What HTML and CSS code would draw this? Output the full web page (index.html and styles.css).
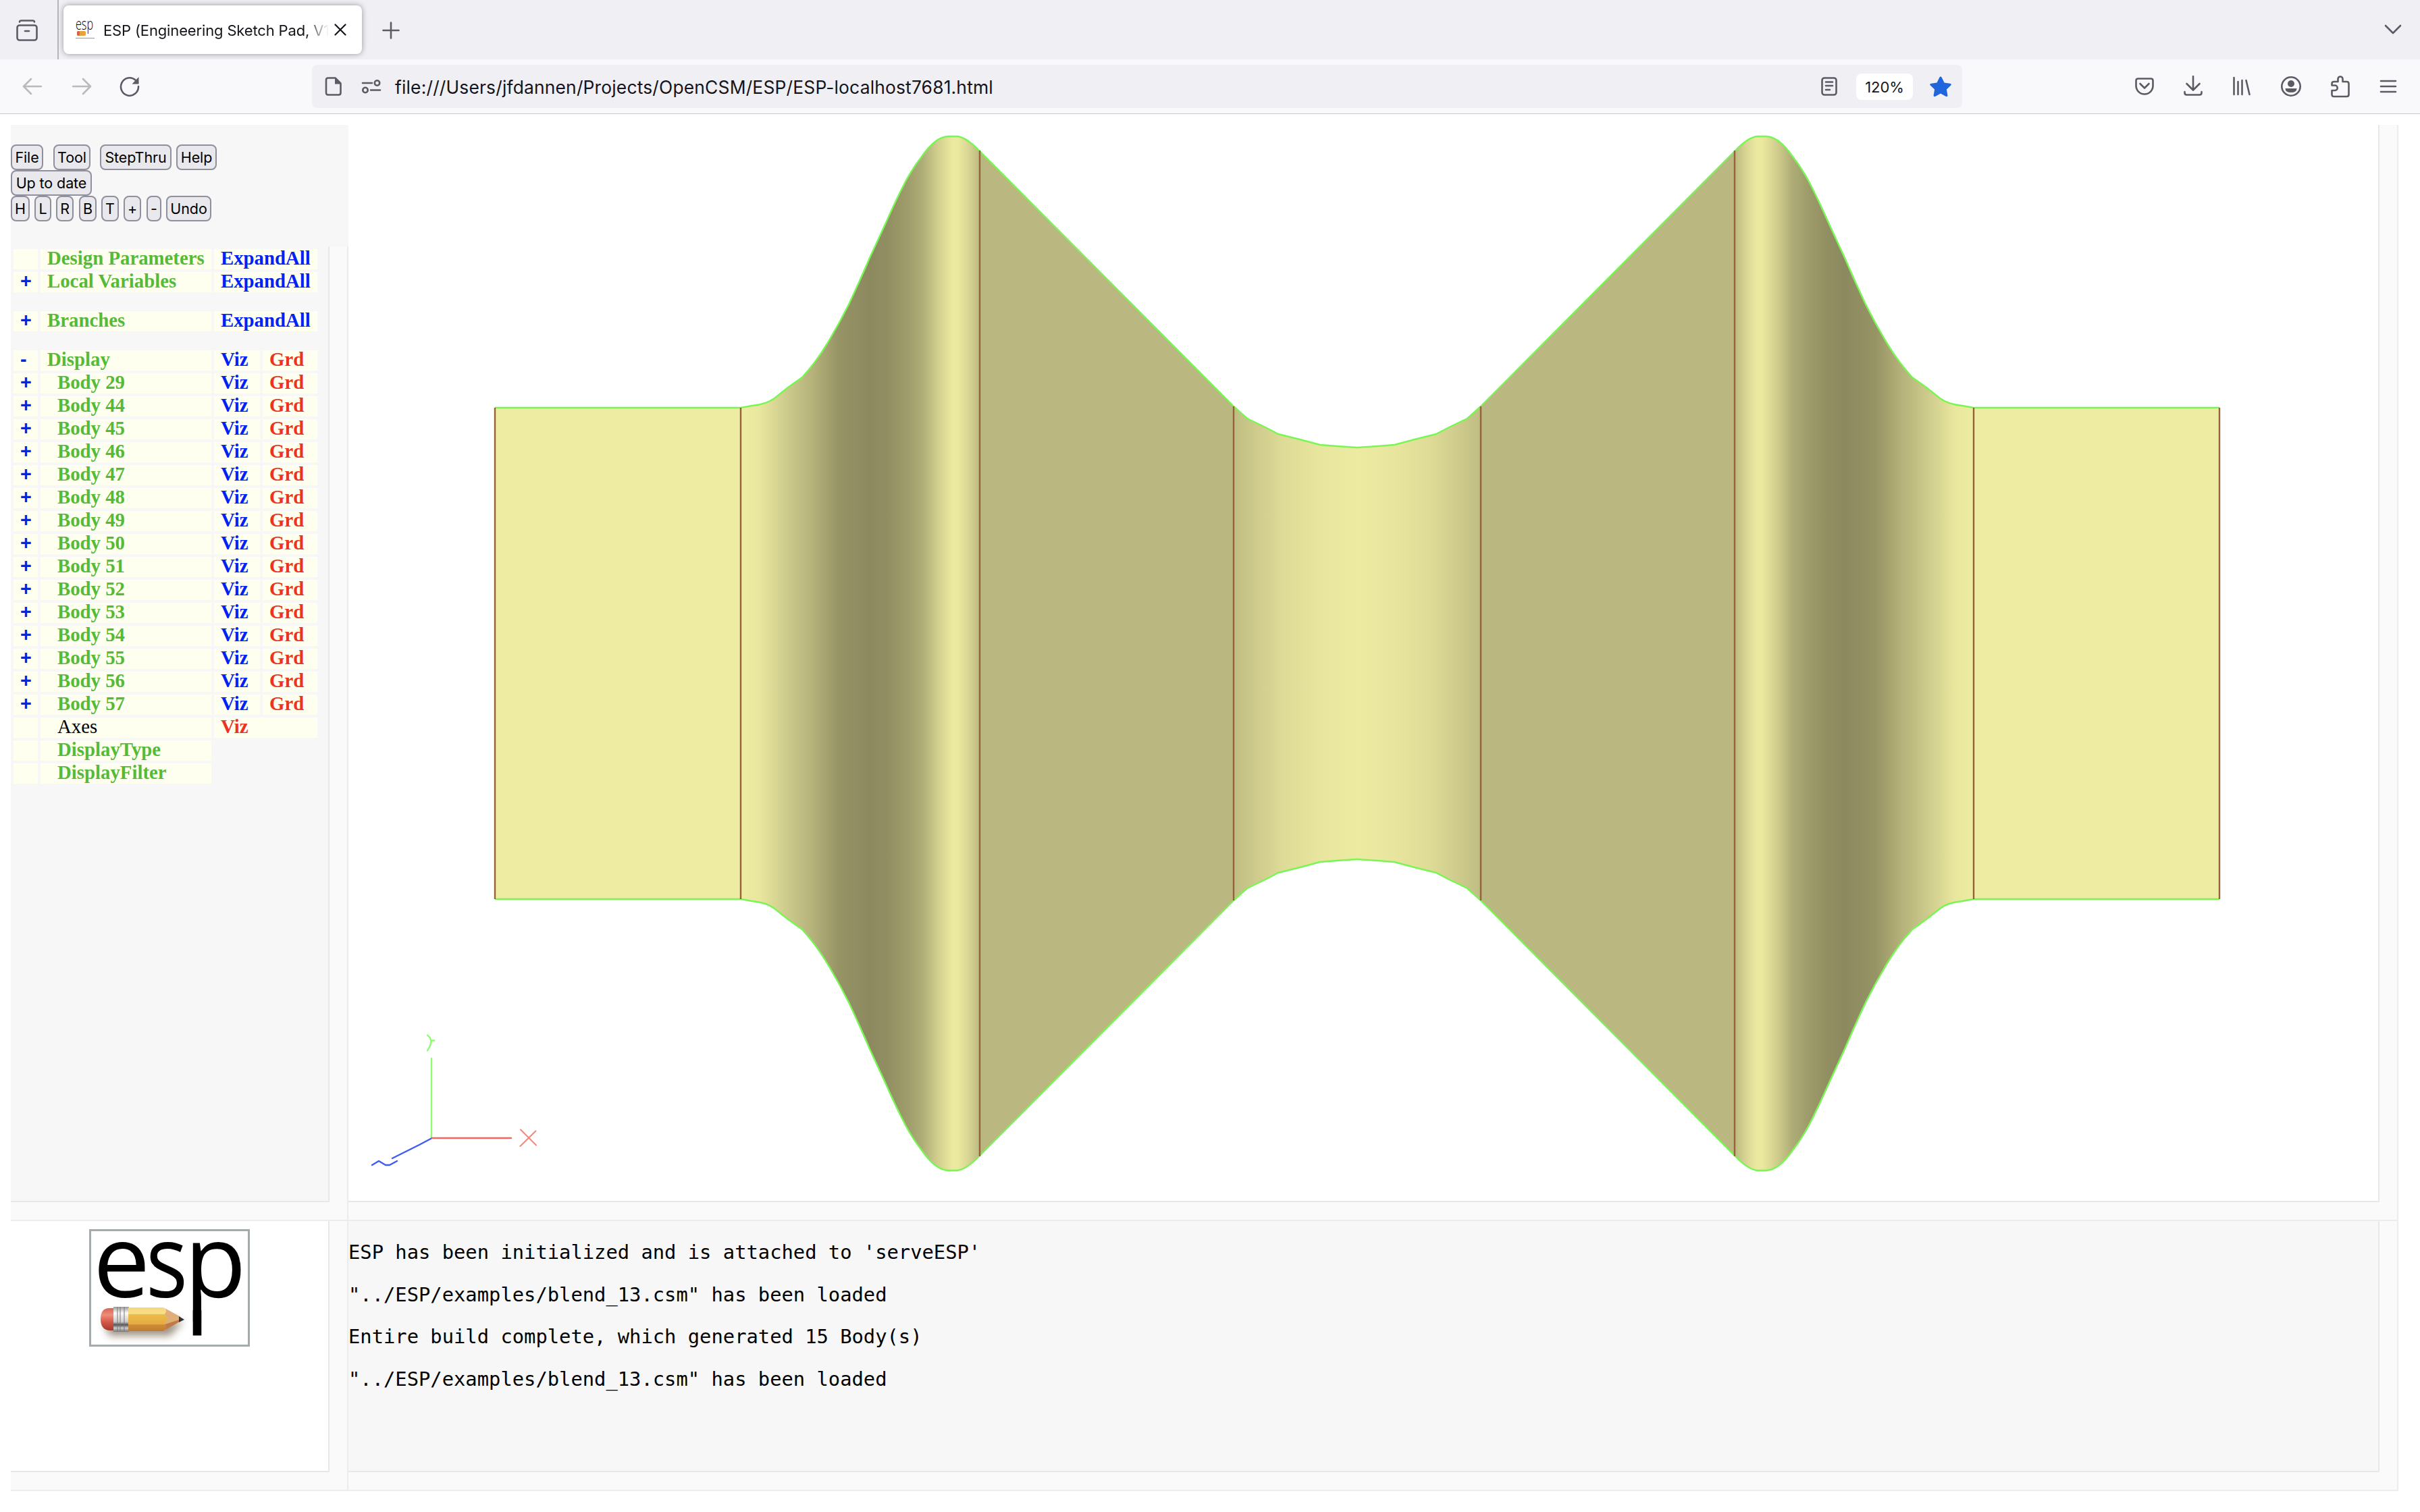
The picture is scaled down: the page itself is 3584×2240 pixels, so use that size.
FILE: index.html
```html
<!DOCTYPE html>
<html lang="en">
<head>
<meta charset="utf-8">
<title>ESP (Engineering Sketch Pad)</title>
<link rel="stylesheet" href="styles.css">
</head>
<body>
<header class="tabbar">
  <div class="tabview"><svg width="32" height="32" viewBox="0 0 32 32" class="ico"><path d="M5 3.500v-.3Q5.300 1.500 7.500 1.500H24.500Q26.700 1.500 27 3.500"/><rect x="1.500" y="8.500" width="29" height="22" rx="3.500"/><path d="M13 17h6"/></svg></div>
  <div class="tab">
    <svg class="favicon" width="28" height="28" viewBox="0 0 28 28"><text x="0" y="14" class="favtext" textLength="26" lengthAdjust="spacingAndGlyphs">esp</text><rect x="2" y="16" width="13" height="7" rx="2" fill="#e8a13c"/><rect x="2" y="16" width="4" height="7" rx="2" fill="#d9604c"/><path d="M0 26.500h28" stroke="#999" stroke-width="1"/></svg>
    <span class="tabtitle">ESP (Engineering Sketch Pad, V1</span>
    <svg class="close" width="18" height="18" viewBox="0 0 18 18"><path d="M1.500 1.500l15 15M16.500 1.500l-15 15" stroke="#15141a" stroke-width="2.200" stroke-linecap="round"/></svg>
  </div>
  <svg class="ico plus" width="26" height="26" viewBox="0 0 26 26"><path d="M13 1.500v23M1.500 13h23"/></svg>
  <svg class="ico chevron" width="26" height="16" viewBox="0 0 26 16"><path d="M2 2l11 11L24 2"/></svg>
</header>
<nav class="toolbar">
  <svg class="ico dim" width="30" height="26" viewBox="0 0 30 26"><path d="M28 13H2M13 2L2 13l11 11"/></svg>
  <svg class="ico dim fwd" width="30" height="26" viewBox="0 0 30 26"><path d="M2 13h26M17 2l11 11-11 11"/></svg>
  <svg class="ico reload" width="30" height="30" viewBox="0 0 30 30"><path d="M28 15A13 13.200 0 1 1 23.500 5.500"/><path d="M28.500 1v10.500H18.500z" fill="#5b5b66" stroke="none"/></svg>
  <div class="urlbar">
    <svg class="ico docicon" width="26" height="30" viewBox="0 0 26 30"><path d="M5 2.500h10.500L23.500 10.500V24.500Q23.500 27.500 20.500 27.500H5Q2 27.500 2 24.500V5.500Q2 2.500 5 2.500z"/><path d="M15 2v9.500h9z" fill="#5b5b66" stroke="none"/></svg>
    <svg class="ico sliders" width="30" height="22" viewBox="0 0 30 22"><path d="M2 6h14M14 16.500h14"/><circle cx="23.500" cy="6" r="3.700"/><circle cx="6" cy="16.500" r="3.700"/></svg>
    <span class="url">file:///Users/jfdannen/Projects/OpenCSM/ESP/ESP-localhost7681.html</span>
    <svg class="ico reader" width="24" height="28" viewBox="0 0 24 28"><rect x="1.500" y="1.500" width="21" height="25" rx="3.500"/><path d="M7 7.500h10M7 13h10M7 19h6"/></svg>
    <span class="zoomlevel">120%</span>
    <svg class="star" width="34" height="32" viewBox="0 0 34 32"><path d="M17 1.500q1.200 0 1.700 1.200l3.800 7.800 8.600 1.200q2.800.6 1 2.800l-6.200 6.100 1.500 8.600q.2 2.500-2.300 1.700L17 26.500l-8.100 4.400q-2.500.8-2.300-1.700l1.500-8.600-6.200-6.100q-1.800-2.200 1-2.800l8.600-1.200 3.800-7.800q.5-1.200 1.700-1.200z" fill="#2165dc"/></svg>
  </div>
  <div class="tools">
    <svg class="ico" width="28" height="26" viewBox="0 0 28 26"><path d="M4.500 1.500h19q3 0 3 3V12a12.500 12.500 0 0 1-25 0V4.500q0-3 3-3z"/><path d="M7.500 9l6.500 6.500L20.500 9"/></svg>
    <svg class="ico dl" width="28" height="30" viewBox="0 0 28 30"><path d="M14 1v20M4.500 12l9.500 9.500 9.500-9.500M1.500 24v1.500q0 3 3 3h19q3 0 3-3V24"/></svg>
    <svg class="ico" width="28" height="30" viewBox="0 0 28 30"><path d="M2.500 2v25M8.500 8v19M14.500 6v21M20.500 6l5 21"/></svg>
    <svg class="ico" width="30" height="30" viewBox="0 0 30 30"><circle cx="15" cy="15" r="13.700"/><circle cx="15" cy="11" r="5" fill="#5b5b66" stroke="none"/><path d="M6.500 18h17q0 6-8.500 6t-8.500-6z" fill="#5b5b66" stroke="none"/></svg>
    <svg class="ico" width="28" height="34" viewBox="0 0 28 34"><path d="M10.500 10V6a3.500 3.500 0 0 1 7 0v4h6q3 0 3 3v16q0 3-3 3h-19q-3 0-3-3v-6h4.500a3.700 3.700 0 0 0 0-7.500H1.500V13q0-3 3-3z"/></svg>
    <svg class="ico" width="26" height="22" viewBox="0 0 26 22"><path d="M2 3h22M2 11h22M2 19h22"/></svg>
  </div>
</nav>
<main class="page">
  <aside class="left">
    <div class="buttons">
      <div class="row"><button class="w48">File</button><button class="w55 m15">Tool</button><button class="w106 m14">StepThru</button><button class="w60 m7">Help</button></div>
      <div class="row"><button class="w120">Up to date</button></div>
      <div class="row"><button class="w28">H</button><button class="w25 m7">L</button><button class="w26 m7">R</button><button class="w26 m8">B</button><button class="w26 m7">T</button><button class="w26 m7">+</button><button class="w22 m8">-</button><button class="w67 m7">Undo</button></div>
    </div>
    <div class="treewrap">
      <div class="tree">
        <i></i><b class="g">Design Parameters</b><b class="u span">ExpandAll</b>
        <b class="u pm">+</b><b class="g">Local Variables</b><b class="u span">ExpandAll</b>
        <hr>
        <b class="u pm">+</b><b class="g">Branches</b><b class="u span">ExpandAll</b>
        <hr>
        <b class="u pm">-</b><b class="g">Display</b><b class="u">Viz</b><b class="r">Grd</b>
        <b class="u pm">+</b><b class="g in">Body 29</b><b class="u">Viz</b><b class="r">Grd</b>
        <b class="u pm">+</b><b class="g in">Body 44</b><b class="u">Viz</b><b class="r">Grd</b>
        <b class="u pm">+</b><b class="g in">Body 45</b><b class="u">Viz</b><b class="r">Grd</b>
        <b class="u pm">+</b><b class="g in">Body 46</b><b class="u">Viz</b><b class="r">Grd</b>
        <b class="u pm">+</b><b class="g in">Body 47</b><b class="u">Viz</b><b class="r">Grd</b>
        <b class="u pm">+</b><b class="g in">Body 48</b><b class="u">Viz</b><b class="r">Grd</b>
        <b class="u pm">+</b><b class="g in">Body 49</b><b class="u">Viz</b><b class="r">Grd</b>
        <b class="u pm">+</b><b class="g in">Body 50</b><b class="u">Viz</b><b class="r">Grd</b>
        <b class="u pm">+</b><b class="g in">Body 51</b><b class="u">Viz</b><b class="r">Grd</b>
        <b class="u pm">+</b><b class="g in">Body 52</b><b class="u">Viz</b><b class="r">Grd</b>
        <b class="u pm">+</b><b class="g in">Body 53</b><b class="u">Viz</b><b class="r">Grd</b>
        <b class="u pm">+</b><b class="g in">Body 54</b><b class="u">Viz</b><b class="r">Grd</b>
        <b class="u pm">+</b><b class="g in">Body 55</b><b class="u">Viz</b><b class="r">Grd</b>
        <b class="u pm">+</b><b class="g in">Body 56</b><b class="u">Viz</b><b class="r">Grd</b>
        <b class="u pm">+</b><b class="g in">Body 57</b><b class="u">Viz</b><b class="r">Grd</b>
        <i></i><span class="in">Axes</span><b class="r span">Viz</b>
        <i></i><b class="g in">DisplayType</b>
        <i></i><b class="g in">DisplayFilter</b>
      </div>
    </div>
  </aside>
  <section class="view">
    <svg class="model" width="3006" height="1594" viewBox="516 185 3006 1594">
      <defs>
        <linearGradient id="blend" gradientUnits="userSpaceOnUse" x1="1097" y1="0" x2="1451" y2="0">
          <stop offset="0" stop-color="#eeeba2"/><stop offset=".08" stop-color="#e9e69e"/><stop offset=".18" stop-color="#d0ce8e"/><stop offset=".29" stop-color="#b7b47c"/><stop offset=".36" stop-color="#a5a26f"/><stop offset=".41" stop-color="#969465"/><stop offset=".54" stop-color="#8c895f"/><stop offset=".61" stop-color="#918f62"/><stop offset=".7" stop-color="#9f9d6b"/><stop offset=".76" stop-color="#afad77"/><stop offset=".83" stop-color="#d4d190"/><stop offset=".885" stop-color="#ebe8a0"/><stop offset=".91" stop-color="#ebe8a0"/><stop offset=".95" stop-color="#dad795"/><stop offset="1" stop-color="#bbb980"/>
        </linearGradient>
        <linearGradient id="waist" gradientUnits="userSpaceOnUse" x1="1827" y1="0" x2="2010" y2="0">
          <stop offset="0" stop-color="#c0bd83"/><stop offset=".2" stop-color="#cfcc8d"/><stop offset=".4" stop-color="#dedb97"/><stop offset=".7" stop-color="#e8e59e"/><stop offset="1" stop-color="#edeaa2"/>
        </linearGradient>
        <g id="half">
          <path fill="#eeeba2" d="M733 604H1097V1332H733z"/>
          <path id="bell" fill="url(#blend)" d="M1097 604L1114 601Q1135 599 1147 590L1167 574L1188 559Q1210 535 1228 504Q1243 479 1257 451Q1273 417 1288 382L1312 330Q1327 296 1341 269Q1353 247 1365 232Q1385 203 1404 202H1418Q1432 204 1451 224V969H1097z"/>
          <use href="#bell" transform="matrix(1 0 0 -1 0 1936)"/>
          <path fill="#bab880" d="M1451 224 1827 602V1334L1451 1712z"/>
          <path fill="url(#waist)" d="M1827 602 1847 620 1874 633 1893 643 1925 651 1955 659 1980 661 2010 663V1273L1980 1275 1955 1277 1925 1285 1893 1293 1874 1303 1847 1316 1827 1334z"/>
          <g fill="none" stroke="#7af556" stroke-width="2.400">
            <path id="rim" d="M733 604H1097L1114 601Q1135 599 1147 590L1167 574L1188 559Q1210 535 1228 504Q1243 479 1257 451Q1273 417 1288 382L1312 330Q1327 296 1341 269Q1353 247 1365 232Q1385 203 1404 202H1418Q1432 204 1451 224L1827 602 1847 620 1874 633 1893 643 1925 651 1955 659 1980 661 2010 663"/>
            <use href="#rim" transform="matrix(1 0 0 -1 0 1936)"/>
          </g>
          <path fill="none" stroke="#95623a" stroke-width="2.400" d="M733 604V1332M1097 604V1332M1451 223V1713M1827 602V1334"/>
        </g>
      </defs>
      <use href="#half"/>
      <use href="#half" transform="matrix(-1 0 0 1 4020 0)"/>
      <g fill="none" stroke-width="2.400" stroke-linecap="round" stroke-linejoin="round">
        <path stroke="#8ffb70" d="M639 1686V1568M633 1533.500l4 4 1 4h5M638.500 1541.500l-1.500 8-4 7"/>
        <path stroke="#f4675c" d="M639 1686H757"/><path stroke="#f4857b" stroke-width="2" d="M771 1673.500l23 23M793.500 1675.500l-23 22.500"/>
        <path stroke="#3f5bf6" d="M638 1687l-17 9-40 20M551 1726l10-6 10 6h6l11-6"/>
      </g>
    </svg>
  </section>
  <div class="logo">
    <svg width="238" height="174" viewBox="0 0 238 174">
      <defs>
        <linearGradient id="wood" x1="0" y1="0" x2="0" y2="1"><stop offset="0" stop-color="#f5d77c"/><stop offset=".27" stop-color="#f7df8b"/><stop offset=".28" stop-color="#edbd4b"/><stop offset=".72" stop-color="#e4ab40"/><stop offset=".73" stop-color="#cf8d38"/><stop offset="1" stop-color="#c07a30"/></linearGradient>
        <linearGradient id="metal" x1="0" y1="0" x2="0" y2="1"><stop offset="0" stop-color="#999"/><stop offset=".25" stop-color="#fafafa"/><stop offset=".6" stop-color="#ccc"/><stop offset=".72" stop-color="#555"/><stop offset=".85" stop-color="#ccc"/><stop offset="1" stop-color="#777"/></linearGradient>
        <linearGradient id="rubber" x1="0" y1="0" x2="0" y2="1"><stop offset="0" stop-color="#cf6857"/><stop offset=".3" stop-color="#ef8d78"/><stop offset=".6" stop-color="#d55b49"/><stop offset="1" stop-color="#a8382c"/></linearGradient>
        <filter id="soft" x="-20%" y="-60%" width="140%" height="220%"><feGaussianBlur stdDeviation="6"/></filter>
      </defs>
      <rect x="1.500" y="1.500" width="235" height="171" fill="#fff" stroke="#a4abae" stroke-width="3"/>
      <path d="M22 138H120L140 136 120 158H30z" fill="#6b5a44" opacity=".65" filter="url(#soft)"/>
      <text class="logotext" y="101"><tspan x="6">e</tspan><tspan x="84" textLength="62" lengthAdjust="spacingAndGlyphs">s</tspan><tspan x="141">p</tspan></text>
      <path d="M153.700 120H166.300V157.500H153.700z" fill="#000"/>
      <path d="M37 117H30Q17 117 17 133T30 150H37z" fill="url(#rubber)"/>
      <rect x="36" y="115" width="23" height="37" fill="url(#metal)"/>
      <path d="M42 115v37M46 115v37M52 115v37" stroke="#777" stroke-width="1"/>
      <path d="M58 116H110L118 124V143L110 151H58z" fill="url(#wood)"/>
      <path d="M110 116L134 129V137L110 151Q118 146 112 141 118 133 112 126 117 120 110 116z" fill="#e0ae79"/>
      <path d="M112 141L134 134V137L110 151Q117 146 112 141z" fill="#c07a48"/>
      <path d="M133 129L141 134 133 138z" fill="#333"/>
    </svg>
  </div>
  <section class="log">
    <p>ESP has been initialized and is attached to 'serveESP'</p>
    <p>"../ESP/examples/blend_13.csm" has been loaded</p>
    <p>Entire build complete, which generated 15 Body(s)</p>
    <p>"../ESP/examples/blend_13.csm" has been loaded</p>
  </section>
</main>
</body>
</html>
```
FILE: styles.css
```css
* { box-sizing: border-box; }
body { margin: 0; width: 3584px; height: 2240px; overflow: hidden; background: #fff; color: #000; font-family: Inter, sans-serif; }
svg { display: block; flex: none; }
.ico { fill: none; stroke: #5b5b66; stroke-width: 2.6; stroke-linecap: round; stroke-linejoin: round; }

.tabbar { height: 88px; background: #f0eff4; display: flex; align-items: flex-start; }
.tabview { width: 87px; height: 88px; padding: 29px 0 0 24px; border-right: 2px solid #b6b5bb; }
.tab { width: 442px; height: 72px; margin: 8px 0 0 7px; padding-left: 18px; background: #fff; border-radius: 8px; box-shadow: 0 0 8px rgba(0, 0, 0, .38); display: flex; align-items: center; }
.favicon, .logo svg { overflow: visible; }
.favtext { font: 300 23px "Open Sans", sans-serif; fill: #000; }
.tabtitle { width: 334px; margin: 2px 0 0 13px; overflow: hidden; white-space: nowrap; font-size: 22px; line-height: 30px; letter-spacing: -.15px; color: #15141a; -webkit-mask-image: linear-gradient(to right, #000 300px, transparent 334px); mask-image: linear-gradient(to right, #000 300px, transparent 334px); }
.close { margin-left: 8px; }
.plus { margin: 32px 0 0 30px; }
.chevron { margin: 36px 27px 0 auto; }

.toolbar { height: 81px; background: #f9f9fb; border-bottom: 1px solid #c8c8cc; display: flex; align-items: center; padding-left: 33px; }
.dim { stroke: #b9b9be; }
.fwd { margin-left: 43px; }
.reload { margin-left: 41px; }
.urlbar { width: 2444px; height: 64px; margin-left: 255px; background: #f0eff4; border-radius: 8px; display: flex; align-items: center; padding-left: 19px; }
.sliders { margin-left: 28px; }
.url { width: 2112px; margin: 2px 0 0 20px; font-size: 26.4px; line-height: 34px; letter-spacing: .18px; color: #15141a; white-space: nowrap; }
.zoomlevel { width: 84px; height: 39px; margin-left: 28px; background: #fff; border-radius: 8px; font-size: 22px; line-height: 40px; text-align: center; color: #15141a; letter-spacing: -.1px; }
.star { margin-left: 24px; }
.tools { flex: 1; display: flex; align-items: center; justify-content: space-between; padding: 0 34px 0 256px; }
.dl { margin-top: -2px; }

.page { display: grid; grid-template-columns: 500px 3036px; grid-template-rows: 1624px 400px; margin: 16px 0 0 16px; }
.left { background: #f7f7f7; border-bottom: 2px solid #ececec; display: flex; flex-direction: column; }
.buttons { height: 180px; padding-top: 29px; }
.row { display: flex; height: 38px; }
button { height: 38px; padding: 0; border: 2px solid #8f8f9d; border-radius: 8px; background: #e9e9ed; color: #000; font: 21.5px/32px Inter, sans-serif; letter-spacing: -.1px; text-align: center; white-space: nowrap; }
.w22 { width: 22px; } .w25 { width: 25px; } .w26 { width: 26px; } .w28 { width: 28px; } .w48 { width: 48px; } .w55 { width: 55px; } .w60 { width: 60px; } .w67 { width: 67px; } .w106 { width: 106px; } .w120 { width: 120px; }
.m7 { margin-left: 7px; } .m8 { margin-left: 8px; } .m14 { margin-left: 14px; } .m15 { margin-left: 15px; }
.treewrap { flex: 1; display: flex; border-right: 2px solid #ececec; background: #fafafa; }
.tree { width: 472px; height: 1416px; padding: 4px 16px 0 4px; background: #f7f7f7; border-right: 2px solid #e8e8e8; border-bottom: 2px solid #e8e8e8; display: grid; grid-template-columns: 36px 253px 68px 81px; gap: 4px; align-content: start; font: 28.8px/30px "Liberation Serif", serif; }
.tree > * { background: #fffff0; white-space: nowrap; padding-left: 10px; height: 30px; line-height: 27px; }
.tree > i { grid-column: 1; }
.tree > hr { grid-column: 1 / -1; width: 100%; height: 20px; margin: 0; border: 0; background: none; }
.tree > .in { padding-left: 25px; }
.tree > .pm { font-family: "Liberation Sans", sans-serif; }
.span { grid-column: span 2; }
.g { color: #55ba37; } .u { color: #0022f5; } .r { color: #ea3323; }

.view { background: #fafafa; border-right: 2px solid #ececec; border-bottom: 2px solid #ececec; }
.model { width: 3008px; height: 1596px; background: #fff; border-right: 2px solid #e8e8e8; border-bottom: 2px solid #e8e8e8; }
.logo, .log { border-bottom: 2px solid #ececec; border-right: 2px solid #ececec; }
.logo { background: linear-gradient(#fff, #fff) 0 0 / 470px 370px no-repeat, linear-gradient(#e8e8e8, #e8e8e8) 0 0 / 472px 372px no-repeat #fafafa; padding: 12px 0 0 116px; }
.log { background: linear-gradient(#f7f7f7, #f7f7f7) 0 0 / 3006px 370px no-repeat, linear-gradient(#e8e8e8, #e8e8e8) 0 0 / 3008px 372px no-repeat #fafafa; padding-top: 29px; font: 28.8px/34px "DejaVu Sans Mono", monospace; }
.log p { margin: 0 0 28.6px; white-space: pre; }
.logotext { font: 150px "Open Sans", sans-serif; fill: #000; }
```
